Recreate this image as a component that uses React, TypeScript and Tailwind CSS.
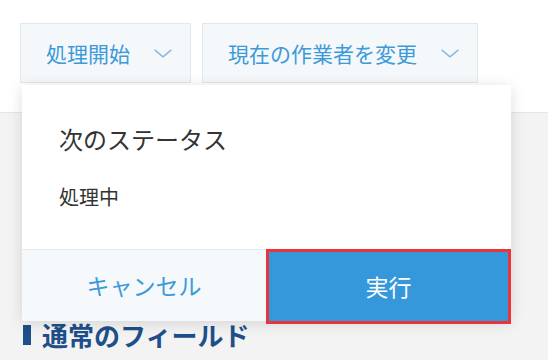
import React from 'react';

const font = { fontFamily: '"Noto Sans CJK JP", "Noto Sans", sans-serif' };

function Chevron() {
  return (
    <svg width="18" height="9" viewBox="0 0 18 9" fill="none" className="shrink-0">
      <path d="M1 1.2 L9 7.8 L17 1.2" stroke="#8db8de" strokeWidth="1.5" strokeLinecap="round" strokeLinejoin="round" />
    </svg>
  );
}

function ActionButton({ label }: { label: string }) {
  return (
    <button className="h-[60px] flex items-center gap-[24px] pl-[25px] pr-[18px] bg-[#f4f8fb] border border-[#e3e8eb] text-[#3d9ad9] text-[21px] leading-none">
      <span>{label}</span>
      <Chevron />
    </button>
  );
}

export default function App() {
  return (
    <div className="relative w-[548px] h-[360px] overflow-hidden bg-[#f3f3f3]" style={font}>
      <div className="h-[113px] bg-white border-b border-[#e6e6e6] flex items-start gap-[11px] pl-[20px] pt-[23px]">
        <ActionButton label="処理開始" />
        <ActionButton label="現在の作業者を変更" />
      </div>

      <div className="pl-[23px] pt-[207px] flex items-center gap-[11px]">
        <span className="w-[8px] h-[20px] bg-[#1d4f8a]" />
        <span className="text-[26px] leading-[30px] font-bold text-[#1d4f8a]">通常のフィールド</span>
      </div>

      <div className="absolute left-[22px] top-[85px] w-[489px] bg-white shadow-[0_2px_14px_rgba(0,0,0,0.13)]">
        <div className="pl-[37px] pt-[40px] pb-[40px]">
          <div className="text-[24px] leading-[28px] text-[#333333]">次のステータス</div>
          <div className="mt-[32px] text-[20px] leading-[24px] text-[#333333]">処理中</div>
        </div>
        <div className="flex h-[72px]">
          <button className="flex-1 bg-[#f5f9fb] border-t border-[#e6eaec] text-[#3d9ad9] text-[23px] leading-none">
            キャンセル
          </button>
          <button className="w-[245px] h-[75px] bg-[#3498db] border-[3px] border-[#e8343b] text-white text-[23px] leading-none">
            実行
          </button>
        </div>
      </div>
    </div>
  );
}
